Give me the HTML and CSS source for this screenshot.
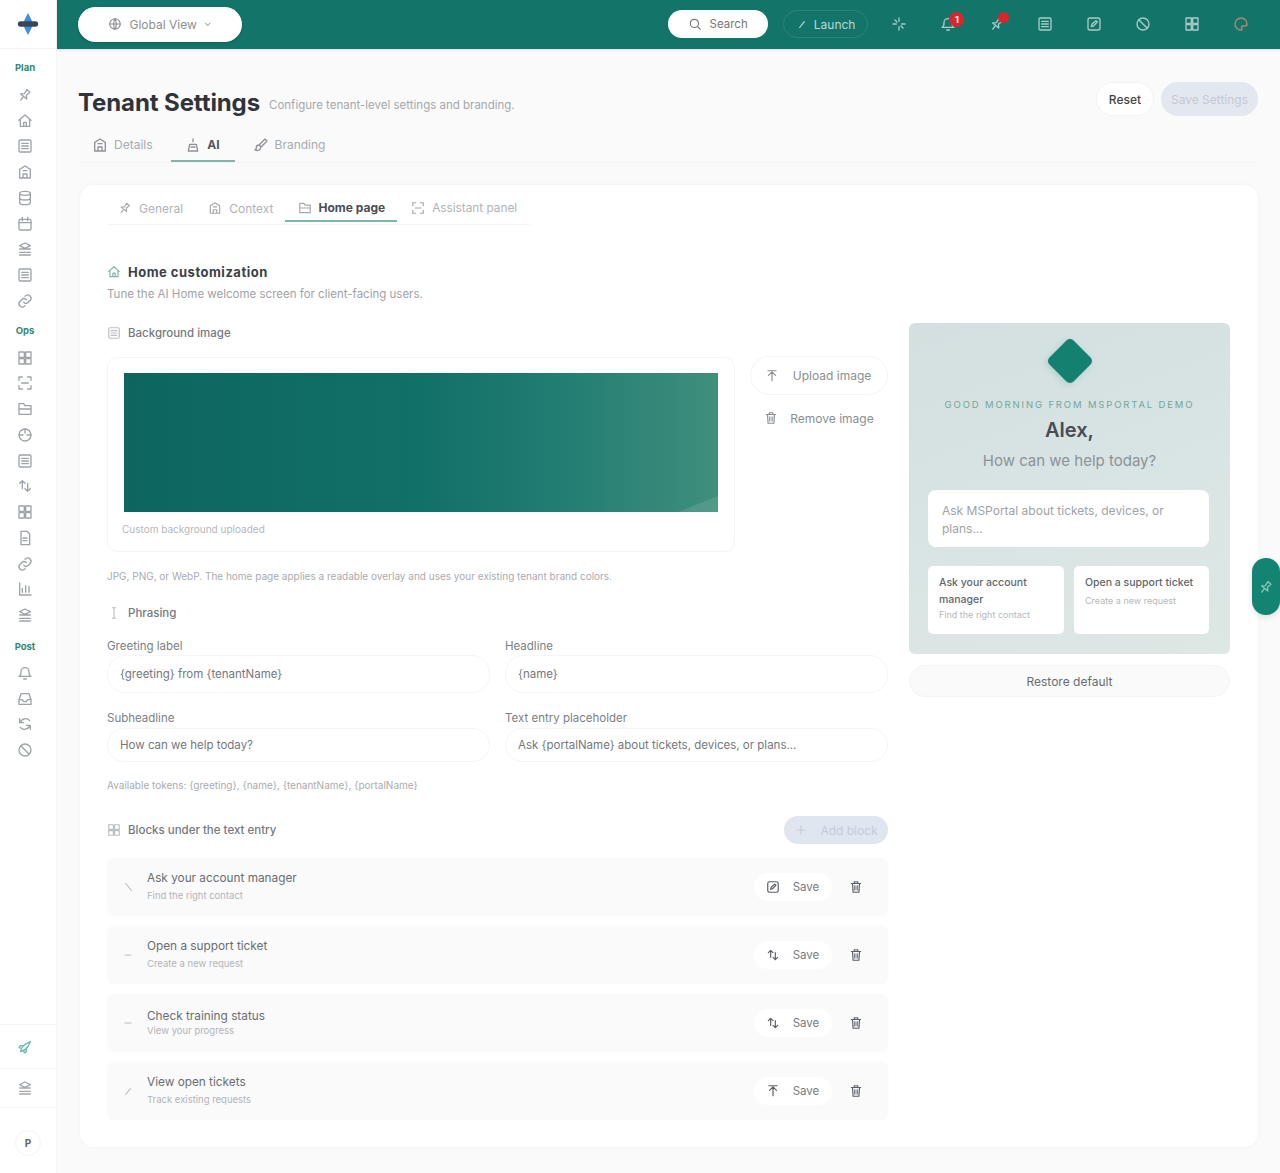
FILE: index.html
```html
<!DOCTYPE html>
<html lang="en">
<head>
  <meta charset="UTF-8">
  <meta name="viewport" content="width=device-width, initial-scale=1.0">
  <title>Tenant Settings</title>
  <link rel="stylesheet" href="styles.css">
</head>
<body>
  <svg class="defs" width="0" height="0">
    <symbol id="i-pin" viewBox="0 0 24 24"><path d="M12 17v5M9 4h6l-1 7 4 4H6l4-4z" transform="rotate(40 12 12)"/></symbol>
    <symbol id="i-home" viewBox="0 0 24 24"><path d="M3 11l9-8 9 8M5 10v10h14V10M10 20v-6h4v6"/></symbol>
    <symbol id="i-list" viewBox="0 0 24 24"><rect x="3" y="3" width="18" height="18" rx="2"/><path d="M7 8h10M7 12h10M7 16h10"/></symbol>
    <symbol id="i-build" viewBox="0 0 24 24"><path d="M4 21V8l8-5 8 5v13zM9 21v-6h6v6M9 10h6"/></symbol>
    <symbol id="i-db" viewBox="0 0 24 24"><ellipse cx="12" cy="5" rx="8" ry="3"/><path d="M4 5v14c0 1.700 3.600 3 8 3s8-1.300 8-3V5M4 12c0 1.700 3.600 3 8 3s8-1.300 8-3"/></symbol>
    <symbol id="i-cal" viewBox="0 0 24 24"><rect x="3" y="5" width="18" height="16" rx="2"/><path d="M3 10h18M8 2v5M16 2v5"/></symbol>
    <symbol id="i-stack" viewBox="0 0 24 24"><path d="M12 3l8 4-8 4-8-4zM4 12h16M4 17h16M4 21h16"/></symbol>
    <symbol id="i-link" viewBox="0 0 24 24"><path d="M10 14a5 5 0 007 0l3-3a5 5 0 00-7-7l-1 1M14 10a5 5 0 00-7 0l-3 3a5 5 0 007 7l1-1"/></symbol>
    <symbol id="i-grid" viewBox="0 0 24 24"><rect x="3" y="3" width="8" height="8"/><rect x="13" y="3" width="8" height="8"/><rect x="3" y="13" width="8" height="8"/><rect x="13" y="13" width="8" height="8"/></symbol>
    <symbol id="i-scan" viewBox="0 0 24 24"><path d="M3 8V3h5M16 3h5v5M21 16v5h-5M8 21H3v-5M7 12h10"/></symbol>
    <symbol id="i-folder" viewBox="0 0 24 24"><path d="M3 20V4h7l2 3h9v13zM3 12h18"/></symbol>
    <symbol id="i-cycle" viewBox="0 0 24 24"><circle cx="12" cy="12" r="9"/><path d="M3 12h6M15 12h6M12 3v6"/></symbol>
    <symbol id="i-doc" viewBox="0 0 24 24"><path d="M6 2h9l4 4v16H6zM9 12h6M9 16h6"/></symbol>
    <symbol id="i-chart" viewBox="0 0 24 24"><path d="M4 3v18h17M8 17v-6M13 17V7M18 17v-9"/></symbol>
    <symbol id="i-rocket" viewBox="0 0 24 24"><path d="M5 19c1-4 3-8 7-11 3-2 6-3 8-4-1 2-2 5-4 8-3 4-7 6-11 7zM9 10H5l-2 3 4 1M14 15v4l-3 2-1-4"/></symbol>
    <symbol id="i-inbox" viewBox="0 0 24 24"><path d="M3 13l3-9h12l3 9v7H3zM3 13h5l2 3h4l2-3h5"/></symbol>
    <symbol id="i-undo" viewBox="0 0 24 24"><path d="M4 4v6h6M20 20v-6h-6M5 10a8 8 0 0114-3M19 14a8 8 0 01-14 3"/></symbol>
    <symbol id="i-ban" viewBox="0 0 24 24"><circle cx="12" cy="12" r="9"/><path d="M6 6l12 12"/></symbol>
    <symbol id="i-globe" viewBox="0 0 24 24"><circle cx="12" cy="12" r="9"/><path d="M3 12h18M12 3c3 3 3 15 0 18M12 3c-3 3-3 15 0 18"/></symbol>
    <symbol id="i-search" viewBox="0 0 24 24"><circle cx="11" cy="11" r="7"/><path d="M16 16l5 5"/></symbol>
    <symbol id="i-bell" viewBox="0 0 24 24"><path d="M6 10a6 6 0 0112 0c0 6 3 7 3 7H3s3-1 3-7M10 21h4"/></symbol>
    <symbol id="i-spark" viewBox="0 0 24 24"><path d="M12 3v5M12 16v5M3 12h5M16 12h5M6 6l3 3M15 15l3 3"/></symbol>
    <symbol id="i-edit" viewBox="0 0 24 24"><rect x="3" y="3" width="18" height="18" rx="3"/><path d="M8 16l1-4 6-5 2 2-6 6z"/></symbol>
    <symbol id="i-palette" viewBox="0 0 24 24"><path d="M12 3a9 9 0 000 18c2 0 2-2 1-3s0-3 2-3h3c2 0 3-2 3-3 0-5-4-9-9-9z"/></symbol>
    <symbol id="i-brush" viewBox="0 0 24 24"><path d="M18 3l3 3-9 9-3-3zM9 12c-3 0-4 2-4 4s-1 3-2 3c2 2 8 2 9-4"/></symbol>
    <symbol id="i-up" viewBox="0 0 24 24"><path d="M12 20V5M6 11l6-6 6 6M5 3h14"/></symbol>
    <symbol id="i-trash" viewBox="0 0 24 24"><path d="M4 6h16M9 6V3h6v3M6 6l1 15h10l1-15M10 10v7M14 10v7"/></symbol>
    <symbol id="i-type" viewBox="0 0 24 24"><path d="M9 3h6M12 3v18M9 21h6"/></symbol>
    <symbol id="i-plus" viewBox="0 0 24 24"><path d="M12 5v14M5 12h14"/></symbol>
    <symbol id="i-phone" viewBox="0 0 24 24"><path d="M8 6l10 12"/></symbol>
    <symbol id="i-minus" viewBox="0 0 24 24"><path d="M7 12h10"/></symbol>
    <symbol id="i-check" viewBox="0 0 24 24"><path d="M8 18l8-10"/></symbol>
    <symbol id="i-swap" viewBox="0 0 24 24"><path d="M4 8l4-4 4 4M8 4v12M20 16l-4 4-4-4M16 20V8"/></symbol>
    <symbol id="i-bot" viewBox="0 0 24 24"><path d="M12 3v4M5 21l2-10h10l2 10zM9 15h6"/></symbol>
  </svg>

  <div class="app">
    <aside class="sidebar">
      <div class="logo">
        <svg class="logo-mark" viewBox="0 0 26 26"><path class="logo-blue" d="M13 1l4 8v8l-4 8-4-8V9z"/><rect class="logo-dark" x="2" y="10" width="22" height="6" rx="3"/></svg>
      </div>
      <nav class="side-nav">
        <p class="side-label">Plan</p>
        <a class="side-item"><svg class="ico"><use href="#i-pin"/></svg></a>
        <a class="side-item"><svg class="ico"><use href="#i-home"/></svg></a>
        <a class="side-item"><svg class="ico"><use href="#i-list"/></svg></a>
        <a class="side-item"><svg class="ico"><use href="#i-build"/></svg></a>
        <a class="side-item"><svg class="ico"><use href="#i-db"/></svg></a>
        <a class="side-item"><svg class="ico"><use href="#i-cal"/></svg></a>
        <a class="side-item"><svg class="ico"><use href="#i-stack"/></svg></a>
        <a class="side-item"><svg class="ico"><use href="#i-list"/></svg></a>
        <a class="side-item"><svg class="ico"><use href="#i-link"/></svg></a>
        <p class="side-label">Ops</p>
        <a class="side-item"><svg class="ico"><use href="#i-grid"/></svg></a>
        <a class="side-item"><svg class="ico"><use href="#i-scan"/></svg></a>
        <a class="side-item"><svg class="ico"><use href="#i-folder"/></svg></a>
        <a class="side-item"><svg class="ico"><use href="#i-cycle"/></svg></a>
        <a class="side-item"><svg class="ico"><use href="#i-list"/></svg></a>
        <a class="side-item"><svg class="ico"><use href="#i-swap"/></svg></a>
        <a class="side-item"><svg class="ico"><use href="#i-grid"/></svg></a>
        <a class="side-item"><svg class="ico"><use href="#i-doc"/></svg></a>
        <a class="side-item"><svg class="ico"><use href="#i-link"/></svg></a>
        <a class="side-item"><svg class="ico"><use href="#i-chart"/></svg></a>
        <a class="side-item"><svg class="ico"><use href="#i-stack"/></svg></a>
        <p class="side-label post">Post</p>
        <a class="side-item"><svg class="ico"><use href="#i-bell"/></svg></a>
        <a class="side-item"><svg class="ico"><use href="#i-inbox"/></svg></a>
        <a class="side-item"><svg class="ico"><use href="#i-undo"/></svg></a>
        <a class="side-item"><svg class="ico"><use href="#i-ban"/></svg></a>
      </nav>
      <div class="side-foot">
        <a class="foot-item teal"><svg class="ico"><use href="#i-rocket"/></svg></a>
        <a class="foot-item short"><svg class="ico"><use href="#i-stack"/></svg></a>
        <div class="foot-user"><span class="avatar">P</span></div>
      </div>
    </aside>

    <div class="main">
      <header class="topbar">
        <button class="scope-btn"><svg class="ico small"><use href="#i-globe"/></svg>Global View<span class="caret">&#8964;</span></button>
        <div class="top-right">
          <button class="search-btn"><svg class="ico small"><use href="#i-search"/></svg>Search</button>
          <button class="launch-btn"><svg class="ico small"><use href="#i-check"/></svg>Launch</button>
          <a class="top-icon"><svg class="ico"><use href="#i-spark"/></svg></a>
          <a class="top-icon"><svg class="ico"><use href="#i-bell"/></svg><span class="badge">1</span></a>
          <a class="top-icon"><svg class="ico"><use href="#i-pin"/></svg><span class="badge dot"></span></a>
          <a class="top-icon"><svg class="ico"><use href="#i-list"/></svg></a>
          <a class="top-icon"><svg class="ico"><use href="#i-edit"/></svg></a>
          <a class="top-icon"><svg class="ico"><use href="#i-ban"/></svg></a>
          <a class="top-icon"><svg class="ico"><use href="#i-grid"/></svg></a>
          <a class="top-icon orange"><svg class="ico"><use href="#i-palette"/></svg></a>
        </div>
      </header>

      <main class="content">
        <div class="page-head">
          <h1>Tenant Settings</h1>
          <p class="page-sub">Configure tenant-level settings and branding.</p>
          <div class="head-actions">
            <button class="btn-reset">Reset</button>
            <button class="btn-save">Save Settings</button>
          </div>
        </div>

        <div class="tabs">
          <a class="tab"><svg class="ico"><use href="#i-build"/></svg>Details</a>
          <a class="tab active"><svg class="ico"><use href="#i-bot"/></svg>AI</a>
          <a class="tab"><svg class="ico"><use href="#i-brush"/></svg>Branding</a>
        </div>

        <section class="card">
          <div class="subtabs">
            <a class="subtab"><svg class="ico small"><use href="#i-pin"/></svg>General</a>
            <a class="subtab"><svg class="ico small"><use href="#i-build"/></svg>Context</a>
            <a class="subtab active"><svg class="ico small"><use href="#i-folder"/></svg>Home page</a>
            <a class="subtab"><svg class="ico small"><use href="#i-scan"/></svg>Assistant panel</a>
          </div>

          <div class="section-head">
            <h2><svg class="ico small teal-ico"><use href="#i-home"/></svg>Home customization</h2>
            <p>Tune the AI Home welcome screen for client-facing users.</p>
          </div>

          <div class="columns">
            <div class="col-left">
              <h3 class="group-title first"><svg class="ico small"><use href="#i-list"/></svg>Background image</h3>
              <div class="bg-row">
                <div class="bg-box">
                  <div class="bg-image"></div>
                  <p class="bg-caption">Custom background uploaded</p>
                </div>
                <div class="bg-actions">
                  <button class="btn-upload"><svg class="ico small"><use href="#i-up"/></svg>Upload image</button>
                  <button class="btn-remove"><svg class="ico small"><use href="#i-trash"/></svg>Remove image</button>
                </div>
              </div>
              <p class="hint">JPG, PNG, or WebP. The home page applies a readable overlay and uses your existing tenant brand colors.</p>

              <h3 class="group-title phrasing"><svg class="ico small"><use href="#i-type"/></svg>Phrasing</h3>
              <div class="form-grid">
                <label class="field">Greeting label<input type="text" value="{greeting} from {tenantName}"></label>
                <label class="field">Headline<input type="text" value="{name}"></label>
                <label class="field lower">Subheadline<input type="text" value="How can we help today?"></label>
                <label class="field lower">Text entry placeholder<input type="text" value="Ask {portalName} about tickets, devices, or plans..."></label>
              </div>
              <p class="tokens">Available tokens: {greeting}, {name}, {tenantName}, {portalName}</p>

              <div class="blocks-head">
                <h3 class="group-title"><svg class="ico small"><use href="#i-grid"/></svg>Blocks under the text entry</h3>
                <button class="btn-add"><svg class="ico small"><use href="#i-plus"/></svg>Add block</button>
              </div>
              <ul class="blocks">
                <li class="block">
                  <svg class="ico small grip"><use href="#i-phone"/></svg>
                  <div class="block-text"><strong>Ask your account manager</strong><span>Find the right contact</span></div>
                  <button class="btn-mini"><svg class="ico small"><use href="#i-edit"/></svg>Save</button>
                  <svg class="ico small del"><use href="#i-trash"/></svg>
                </li>
                <li class="block">
                  <svg class="ico small grip"><use href="#i-minus"/></svg>
                  <div class="block-text"><strong>Open a support ticket</strong><span>Create a new request</span></div>
                  <button class="btn-mini"><svg class="ico small"><use href="#i-swap"/></svg>Save</button>
                  <svg class="ico small del"><use href="#i-trash"/></svg>
                </li>
                <li class="block">
                  <svg class="ico small grip"><use href="#i-minus"/></svg>
                  <div class="block-text tight"><strong>Check training status</strong><span>View your progress</span></div>
                  <button class="btn-mini"><svg class="ico small"><use href="#i-swap"/></svg>Save</button>
                  <svg class="ico small del"><use href="#i-trash"/></svg>
                </li>
                <li class="block">
                  <svg class="ico small grip"><use href="#i-check"/></svg>
                  <div class="block-text"><strong>View open tickets</strong><span>Track existing requests</span></div>
                  <button class="btn-mini"><svg class="ico small"><use href="#i-up"/></svg>Save</button>
                  <svg class="ico small del"><use href="#i-trash"/></svg>
                </li>
              </ul>
            </div>

            <div class="col-right">
              <div class="preview">
                <div class="diamond"></div>
                <p class="preview-greet">GOOD MORNING FROM MSPORTAL DEMO</p>
                <p class="preview-name">Alex,</p>
                <p class="preview-sub">How can we help today?</p>
                <div class="preview-input">Ask MSPortal about tickets, devices, or plans...</div>
                <div class="preview-cards">
                  <div class="preview-card"><strong>Ask your account manager</strong><span>Find the right contact</span></div>
                  <div class="preview-card"><strong>Open a support ticket</strong><span>Create a new request</span></div>
                </div>
              </div>
              <button class="btn-restore">Restore default</button>
            </div>
          </div>
        </section>
      </main>
    </div>
  </div>

  <a class="side-tab"><svg class="ico"><use href="#i-pin"/></svg></a>
</body>
</html>
```

FILE: styles.css
```css
* {
  box-sizing: border-box;
}
body {
  margin: 0;
  font-family: Inter, "Liberation Sans", sans-serif;
  background: #fafafa;
  color: #2b2f36;
  font-size: 12px;
}
p, h1, h2, h3, ul {
  margin: 0;
  padding: 0;
}
button {
  font-family: inherit;
  border: none;
  background: none;
  padding: 0;
}
.defs {
  position: absolute;
}
.ico {
  width: 16px;
  height: 16px;
  fill: none;
  stroke: currentColor;
  stroke-width: 2;
  stroke-linecap: round;
  stroke-linejoin: round;
  flex: none;
}
.ico.small {
  width: 14px;
  height: 14px;
}
.app {
  display: flex;
  min-height: 1173px;
}

/* sidebar */
.sidebar {
  width: 57px;
  flex: none;
  background: #fff;
  display: flex;
  flex-direction: column;
  border-right: 1px solid #f6f6f6;
}
.logo {
  height: 49px;
  display: flex;
  align-items: center;
  justify-content: center;
  border-bottom: 1px solid #f4f4f4;
}
.logo-mark {
  width: 24px;
  height: 24px;
}
.logo-blue {
  fill: #3d8fe0;
}
.logo-dark {
  fill: #3a4656;
}
.side-nav {
  display: flex;
  flex-direction: column;
  align-items: center;
  padding-top: 12px;
  flex: 1;
}
.side-label {
  font-size: 9.5px;
  font-weight: 700;
  color: #2f8a72;
  height: 13px;
  line-height: 13px;
  margin: 0 0 8px -6px;
}
.side-item {
  height: 25.75px;
  display: flex;
  align-items: center;
  justify-content: center;
  color: #9ea3a9;
  margin-left: -6px;
}
.side-item + .side-label {
  margin-top: 10px;
}
.side-item + .side-label.post {
  margin-top: 12px;
  margin-bottom: 7px;
}
.side-foot {
  display: flex;
  flex-direction: column;
  align-items: center;
}
.foot-item {
  width: 100%;
  height: 44px;
  display: flex;
  align-items: center;
  justify-content: center;
  color: #a5a8ad;
  border-top: 1px solid #f5f5f5;
  padding-right: 6px;
}
.foot-item.short {
  height: 39px;
}
.foot-item.teal {
  color: #6cbcae;
}
.foot-user {
  width: 100%;
  height: 66px;
  padding-top: 4px;
  display: flex;
  align-items: center;
  justify-content: center;
  border-top: 1px solid #f5f5f5;
}
.avatar {
  width: 26px;
  height: 26px;
  border-radius: 50%;
  border: 1px solid #f4f4f4;
  display: flex;
  align-items: center;
  justify-content: center;
  font-size: 10px;
  font-weight: 700;
  color: #666;
}

/* top bar */
.main {
  flex: 1;
  min-width: 0;
  display: flex;
  flex-direction: column;
}
.topbar {
  height: 49px;
  background: #13756a;
  display: flex;
  align-items: center;
  padding: 0 15px 1px 21px;
  box-shadow: 0 1px 2px #d8dde0;
}
.scope-btn {
  width: 164px;
  height: 35px;
  background: #fff;
  border-radius: 18px;
  display: flex;
  align-items: center;
  justify-content: center;
  gap: 7px;
  color: #8b8f94;
  font-size: 12px;
  box-shadow: 0 1px 3px rgba(0, 0, 0, 0.2);
}
.caret {
  font-size: 10px;
  margin-top: -4px;
}
.top-right {
  margin-left: auto;
  display: flex;
  align-items: center;
}
.search-btn {
  width: 100px;
  height: 28px;
  background: #fff;
  border-radius: 14px;
  display: flex;
  align-items: center;
  justify-content: center;
  gap: 8px;
  color: #777;
  font-size: 11.5px;
}
.launch-btn {
  width: 85px;
  height: 28px;
  margin: 0 7px 0 15px;
  border: 1px solid #2a8478;
  border-radius: 14px;
  color: #bcd9d4;
  display: flex;
  align-items: center;
  justify-content: center;
  gap: 5px;
  font-size: 12px;
}
.top-icon {
  width: 48.8px;
  height: 30px;
  position: relative;
  display: flex;
  align-items: center;
  justify-content: center;
  color: #a9cbc5;
}
.top-icon.orange {
  color: #b08a6a;
}
.badge {
  position: absolute;
  top: 3px;
  left: 26px;
  width: 15px;
  height: 15px;
  border-radius: 50%;
  background: #d9262c;
  color: #fff;
  font-size: 9px;
  font-weight: 700;
  text-align: center;
  line-height: 15px;
}
.badge.dot {
  width: 11px;
  height: 11px;
  top: 3px;
}

/* page head */
.content {
  padding: 32px 22px 25px 22px;
}
.page-head {
  display: flex;
  align-items: center;
  height: 34px;
  margin-top: 1px;
}
h1 {
  font-size: 24px;
  font-weight: 700;
  letter-spacing: -0.1px;
  color: #30343a;
  margin: 7px 0 0 -1px;
}
.page-sub {
  margin: 12px 0 0 9px;
  color: #a5a8ad;
  font-size: 11.5px;
}
.head-actions {
  margin-left: auto;
  display: flex;
  gap: 7px;
}
.btn-reset {
  width: 58px;
  height: 34px;
  background: #fff;
  border: 1px solid #f3f3f3;
  border-radius: 17px;
  font-size: 12px;
  font-weight: 500;
  color: #444;
}
.btn-save {
  width: 97px;
  height: 34px;
  background: #e3e7f0;
  border-radius: 17px;
  font-size: 12px;
  color: #c3c9d3;
}
.tabs {
  display: flex;
  height: 34px;
  margin-top: 13px;
  border-bottom: 1px solid #f3f3f3;
  padding-left: 1px;
}
.tab {
  display: flex;
  align-items: center;
  gap: 6px;
  padding: 0 12px 2px;
  margin-right: 6px;
  color: #a8abb0;
  font-size: 12px;
}
.tab .ico {
  color: #8e9196;
}
.tab.active {
  width: 64px;
  justify-content: center;
  padding: 0;
  margin-right: 6px;
  color: #55595f;
  font-weight: 700;
  border-bottom: 2px solid #7fb5aa;
}

/* card */
.card {
  background: #fff;
  border-radius: 14px;
  margin-top: 22px;
  padding: 10px 27px 28px 27px;
  box-shadow: 0 0 4px rgba(0, 0, 0, 0.04);
  height: 962px;
  margin-left: 1px;
}
.subtabs {
  display: flex;
  width: 423px;
  height: 30px;
  border-bottom: 1px solid #f5f5f5;
}
.subtab {
  display: flex;
  align-items: center;
  gap: 7px;
  padding: 0 14px 0 11px;
  color: #b0b3b7;
  font-size: 12px;
  height: 26px;
  white-space: nowrap;
}
.subtab .ico {
  color: #a4a7ac;
}
.subtab:last-child {
  padding-left: 14px;
  font-size: 11.8px;
}
.subtab.active {
  height: 27px;
  margin-left: -3px;
  padding: 0 12px 0 13px;
  color: #4a4e54;
  font-weight: 700;
  border-bottom: 2px solid #7fb5aa;
}
.section-head {
  margin-top: 38px;
}
h2 {
  display: flex;
  align-items: center;
  gap: 7px;
  font-size: 13px;
  font-weight: 700;
  letter-spacing: 0.5px;
  color: #3c4046;
  height: 18px;
}
.teal-ico {
  color: #7fb5aa;
}
.section-head p {
  margin-top: 6px;
  color: #9fa2a7;
  font-size: 11.5px;
  height: 14px;
}
.columns {
  display: flex;
  gap: 21px;
  margin-top: 22px;
}
.col-left {
  width: 781px;
  flex: none;
}
.col-right {
  width: 321px;
  flex: none;
}
.group-title {
  display: flex;
  align-items: center;
  gap: 7px;
  font-size: 11.5px;
  font-weight: 500;
  color: #75797f;
  height: 18px;
}
.group-title .ico {
  color: #bbbec2;
}
.group-title.first {
  margin-top: 1px;
}
.bg-row {
  display: flex;
  margin-top: 15px;
  gap: 15px;
}
.bg-box {
  width: 628px;
  height: 195px;
  border: 1px solid #f4f4f4;
  border-radius: 10px;
  padding: 15px 16px 0;
}
.bg-image {
  height: 139px;
  background:
    linear-gradient(to bottom right, transparent 50%, rgba(255, 255, 255, 0.1) 50%) right bottom / 40px 16px no-repeat,
    linear-gradient(90deg, #0e6560 0%, #117069 50%, #217c72 72%, #3f8f7c 100%);
}
.bg-caption {
  margin: 11px 0 0 -2px;
  font-size: 10px;
  color: #b5b7ba;
}
.bg-actions {
  flex: 1;
  display: flex;
  flex-direction: column;
}
.btn-upload {
  height: 39px;
  margin-top: -1px;
  border: 1px solid #f4f4f4;
  border-radius: 20px;
  display: flex;
  align-items: center;
  justify-content: center;
  gap: 14px;
  color: #8b8e93;
  font-size: 12px;
  padding-right: 2px;
}
.btn-remove {
  height: 30px;
  margin-top: 8px;
  display: flex;
  align-items: center;
  justify-content: center;
  gap: 12px;
  color: #8b8e93;
  font-size: 12px;
}
.hint {
  margin-top: 18px;
  font-size: 10px;
  color: #a9abaf;
  height: 12px;
}
.phrasing {
  margin-top: 22px;
}
.form-grid {
  display: grid;
  grid-template-columns: 383px 383px;
  column-gap: 15px;
  row-gap: 18px;
  margin-top: 17px;
}
.field {
  display: flex;
  flex-direction: column;
  gap: 2px;
  font-size: 11.5px;
  color: #7b7f85;
}
.field.lower {
  gap: 3px;
}
.field input {
  height: 38px;
  border: 1px solid #f5f5f5;
  border-radius: 18px;
  padding: 0 12px;
  font-family: inherit;
  font-size: 11.5px;
  color: #74787e;
  background: #fff;
}
.field.lower input {
  height: 34px;
}
.tokens {
  margin-top: 17px;
  font-size: 10px;
  color: #a9abaf;
  height: 12px;
}
.blocks-head {
  display: flex;
  align-items: center;
  justify-content: space-between;
  margin-top: 25px;
}
.btn-add {
  width: 104px;
  height: 28px;
  background: #dfe6ef;
  border-radius: 14px;
  display: flex;
  align-items: center;
  justify-content: center;
  gap: 12px;
  color: #c3ccd8;
  font-size: 12px;
}
.blocks {
  list-style: none;
  margin-top: 14px;
  display: flex;
  flex-direction: column;
  gap: 10px;
}
.block {
  height: 58px;
  background: #fafafa;
  border-radius: 8px;
  box-shadow: 0 0 2px rgba(0, 0, 0, 0.04);
  display: flex;
  align-items: center;
  padding: 0 25px 0 14px;
}
.grip {
  color: #b9bcc0;
}
.block-text {
  margin-left: 12px;
  flex: 1;
  display: flex;
  flex-direction: column;
  gap: 5px;
  padding-bottom: 2px;
}
.block-text.tight {
  gap: 2px;
}
.block-text strong {
  font-size: 11.8px;
  font-weight: 400;
  color: #696d73;
}
.block-text span {
  font-size: 9.5px;
  color: #b2b4b8;
}
.btn-mini {
  width: 78px;
  height: 28px;
  background: #fff;
  border-radius: 14px;
  display: flex;
  align-items: center;
  justify-content: center;
  gap: 13px;
  font-size: 11.5px;
  color: #777b80;
  margin-right: 17px;
  padding-right: 1px;
}
.btn-mini .ico {
  color: #5a5e64;
}
.del {
  color: #5a5e64;
}

/* preview */
.preview {
  height: 331px;
  border-radius: 6px;
  background: linear-gradient(160deg, #d3dfe0 0%, #d9e4e4 55%, #dde8e5 100%);
  display: flex;
  flex-direction: column;
  align-items: center;
  padding: 17px 19px 0;
}
.diamond {
  width: 34px;
  height: 34px;
  margin-top: 4px;
  background: #14806f;
  border-radius: 5px;
  transform: rotate(45deg);
  box-shadow: 0 2px 6px rgba(20, 128, 111, 0.2);
}
.preview-greet {
  margin-top: 21px;
  font-size: 9.5px;
  letter-spacing: 1.85px;
  color: #6fa899;
  white-space: nowrap;
}
.preview-name {
  margin-top: 8px;
  font-size: 20px;
  font-weight: 600;
  color: #474c55;
}
.preview-sub {
  margin-top: 9px;
  font-size: 15px;
  color: #8a9298;
}
.preview-input {
  width: 281px;
  height: 57px;
  margin-top: 20px;
  background: #fff;
  border-radius: 8px;
  padding: 12px 14px;
  font-size: 12px;
  line-height: 18px;
  color: #a0a3a8;
  align-self: flex-start;
}
.preview-cards {
  width: 100%;
  display: grid;
  grid-template-columns: 136px 135px;
  gap: 10px;
  margin-top: 19px;
}
.preview-card {
  height: 68px;
  background: #fff;
  border-radius: 5px;
  padding: 8px 11px;
  display: flex;
  flex-direction: column;
}
.preview-card strong {
  font-size: 10.5px;
  line-height: 17px;
  font-weight: 500;
  color: #62666c;
}
.preview-card span {
  font-size: 9px;
  line-height: 13px;
  margin-top: 3px;
  color: #b5b7ba;
}
.preview-card:first-child span {
  margin-top: 0;
}
.btn-restore {
  display: block;
  width: 100%;
  height: 32px;
  margin-top: 11px;
  background: #fafafa;
  border: 1px solid #f4f4f4;
  border-radius: 16px;
  font-size: 12px;
  color: #686c72;
}

/* floating tab on the right edge */
.side-tab {
  position: absolute;
  right: 0;
  top: 558px;
  width: 28px;
  height: 57px;
  background: #128471;
  border-radius: 14px;
  display: flex;
  align-items: center;
  justify-content: center;
  color: #8cc5b9;
  box-shadow: 0 2px 6px rgba(0, 0, 0, 0.12);
}
```
